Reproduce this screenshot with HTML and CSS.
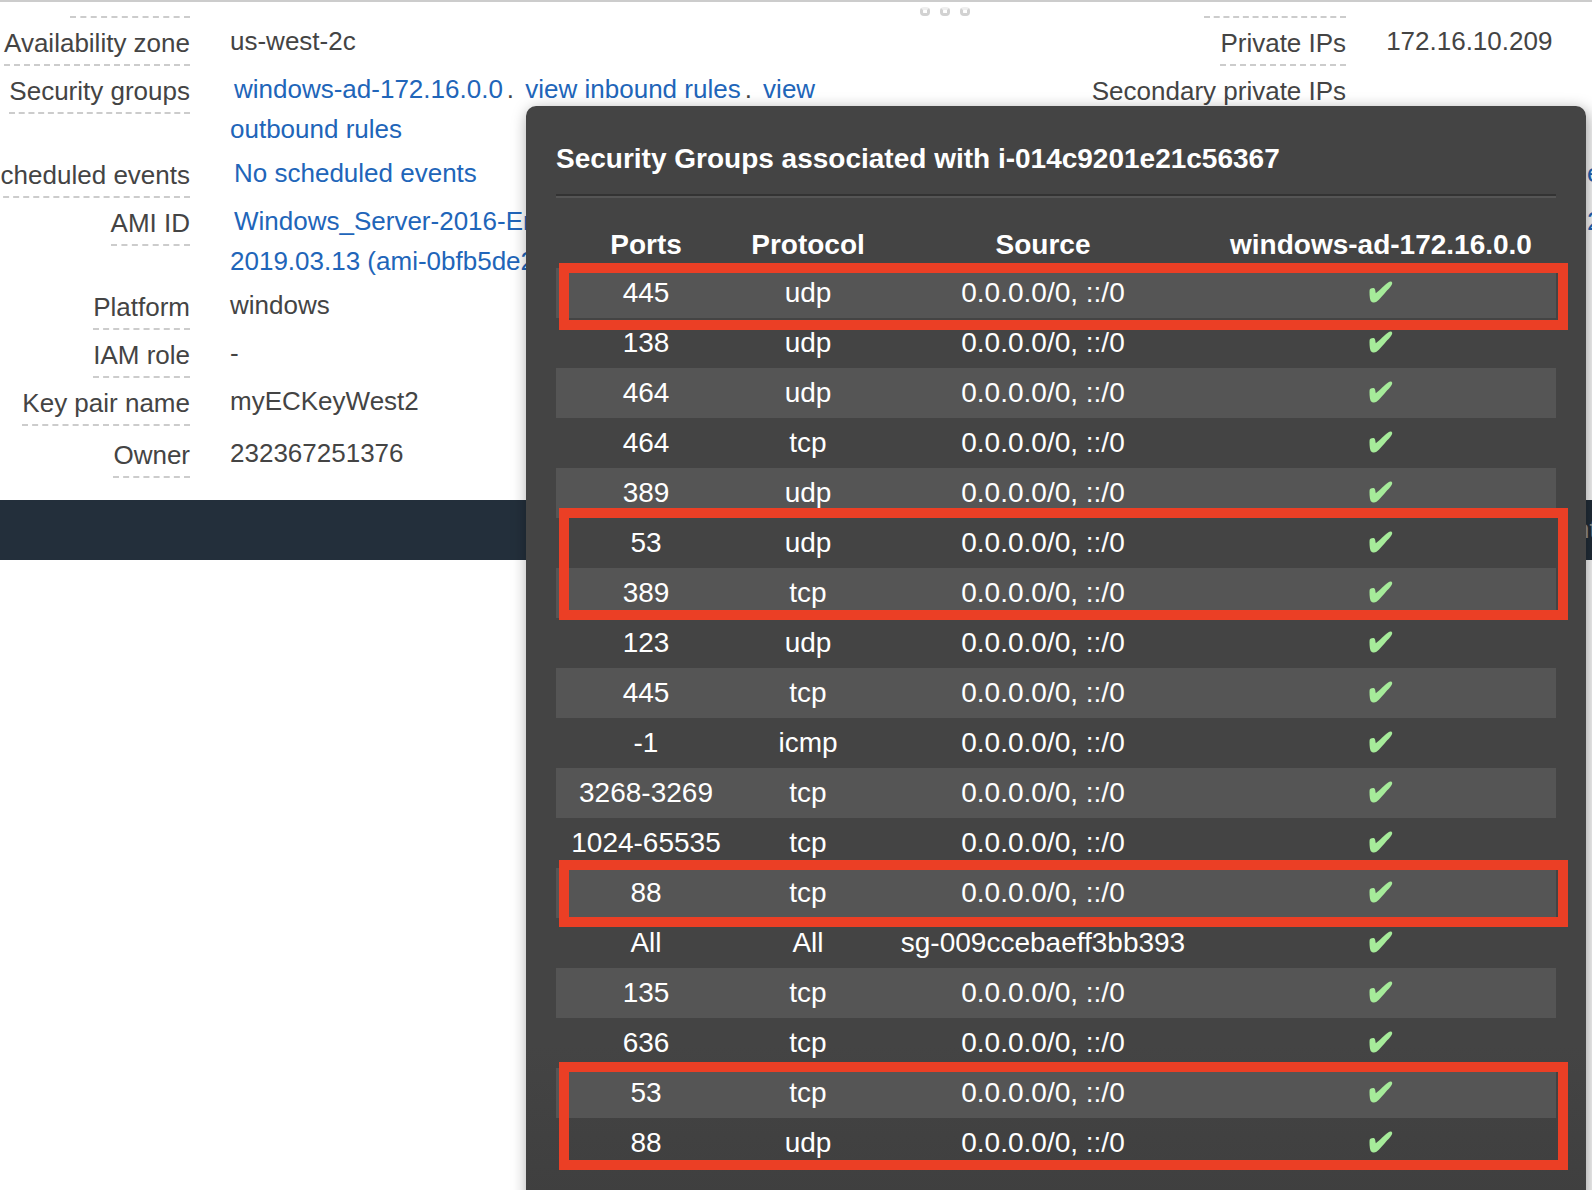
FILE: index.html
```html
<!DOCTYPE html>
<html lang="en">
<head>
<meta charset="utf-8">
<title>Instance details</title>
<link rel="stylesheet" href="styles.css">
</head>
<body>
<svg class="defs" aria-hidden="true"><symbol id="check" viewBox="0 0 24 22"><path d="M0.6 9C0.8 7.500 3.500 6.700 5.200 7.200C6.400 7.600 6.300 10.200 6.800 12.200C10.500 9.500 16 3.500 19.500 1.200C21 .2 23.400 .2 23.200 2.400C23 4.500 20.500 6.800 18 9.500C14.500 13.500 10.500 18.500 7.500 20.800C5.500 22 2.600 21.700 1.500 19.500C.6 17 .3 11.500 .6 9Z"/></symbol></svg>
<main class="page">
  <div class="grip" aria-hidden="true"><i></i><i></i><i></i></div>
  <section class="details">
    <dl class="list">
      <div class="row cut"><dt><span class="stub"></span></dt></div>
      <div class="row"><dt><span>Availability zone</span></dt><dd>us-west-2c</dd></div>
      <div class="row"><dt><span>Security groups</span></dt><dd><a href="#">windows-ad-172.16.0.0</a>. <a href="#">view inbound rules</a>. <a href="#">view<br>outbound rules</a></dd></div>
      <div class="row"><dt><span>Scheduled events</span></dt><dd><a href="#">No scheduled events</a></dd></div>
      <div class="row"><dt><span>AMI ID</span></dt><dd><a href="#">Windows_Server-2016-En<br>2019.03.13 (ami-0bfb5de2</a></dd></div>
      <div class="row"><dt><span>Platform</span></dt><dd>windows</dd></div>
      <div class="row"><dt><span>IAM role</span></dt><dd>-</dd></div>
      <div class="row"><dt><span>Key pair name</span></dt><dd>myECKeyWest2</dd></div>
      <div class="row spaced"><dt><span>Owner</span></dt><dd>232367251376</dd></div>
    </dl>
    <dl class="list side">
      <div class="row cut"><dt><span class="stub wide"></span></dt></div>
      <div class="row"><dt><span>Private IPs</span></dt><dd>172.16.10.209</dd></div>
      <div class="row tall"><dt><span>Secondary private IPs</span></dt><dd></dd></div>
      <div class="row"><dt></dt><dd class="edge"><a href="#">e</a></dd></div>
      <div class="row"><dt></dt><dd class="edge"><a href="#">2</a></dd></div>
    </dl>
  </section>
  <footer class="footer"><span>nt</span></footer>

  <section class="popover">
    <h2>Security Groups associated with i-014c9201e21c56367</h2>
    <div class="rules">
      <table>
        <thead><tr><th class="c-ports">Ports</th><th class="c-protocol">Protocol</th><th class="c-source">Source</th><th class="c-group">windows-ad-172.16.0.0</th></tr></thead>
        <tbody>
          <tr><td>445</td><td>udp</td><td>0.0.0.0/0, ::/0</td><td><svg class="check" role="img" aria-label="Yes"><use href="#check"/></svg></td></tr>
          <tr><td>138</td><td>udp</td><td>0.0.0.0/0, ::/0</td><td><svg class="check" role="img" aria-label="Yes"><use href="#check"/></svg></td></tr>
          <tr><td>464</td><td>udp</td><td>0.0.0.0/0, ::/0</td><td><svg class="check" role="img" aria-label="Yes"><use href="#check"/></svg></td></tr>
          <tr><td>464</td><td>tcp</td><td>0.0.0.0/0, ::/0</td><td><svg class="check" role="img" aria-label="Yes"><use href="#check"/></svg></td></tr>
          <tr><td>389</td><td>udp</td><td>0.0.0.0/0, ::/0</td><td><svg class="check" role="img" aria-label="Yes"><use href="#check"/></svg></td></tr>
          <tr><td>53</td><td>udp</td><td>0.0.0.0/0, ::/0</td><td><svg class="check" role="img" aria-label="Yes"><use href="#check"/></svg></td></tr>
          <tr><td>389</td><td>tcp</td><td>0.0.0.0/0, ::/0</td><td><svg class="check" role="img" aria-label="Yes"><use href="#check"/></svg></td></tr>
          <tr><td>123</td><td>udp</td><td>0.0.0.0/0, ::/0</td><td><svg class="check" role="img" aria-label="Yes"><use href="#check"/></svg></td></tr>
          <tr><td>445</td><td>tcp</td><td>0.0.0.0/0, ::/0</td><td><svg class="check" role="img" aria-label="Yes"><use href="#check"/></svg></td></tr>
          <tr><td>-1</td><td>icmp</td><td>0.0.0.0/0, ::/0</td><td><svg class="check" role="img" aria-label="Yes"><use href="#check"/></svg></td></tr>
          <tr><td>3268-3269</td><td>tcp</td><td>0.0.0.0/0, ::/0</td><td><svg class="check" role="img" aria-label="Yes"><use href="#check"/></svg></td></tr>
          <tr><td>1024-65535</td><td>tcp</td><td>0.0.0.0/0, ::/0</td><td><svg class="check" role="img" aria-label="Yes"><use href="#check"/></svg></td></tr>
          <tr><td>88</td><td>tcp</td><td>0.0.0.0/0, ::/0</td><td><svg class="check" role="img" aria-label="Yes"><use href="#check"/></svg></td></tr>
          <tr><td>All</td><td>All</td><td>sg-009ccebaeff3bb393</td><td><svg class="check" role="img" aria-label="Yes"><use href="#check"/></svg></td></tr>
          <tr><td>135</td><td>tcp</td><td>0.0.0.0/0, ::/0</td><td><svg class="check" role="img" aria-label="Yes"><use href="#check"/></svg></td></tr>
          <tr><td>636</td><td>tcp</td><td>0.0.0.0/0, ::/0</td><td><svg class="check" role="img" aria-label="Yes"><use href="#check"/></svg></td></tr>
          <tr><td>53</td><td>tcp</td><td>0.0.0.0/0, ::/0</td><td><svg class="check" role="img" aria-label="Yes"><use href="#check"/></svg></td></tr>
          <tr><td>88</td><td>udp</td><td>0.0.0.0/0, ::/0</td><td><svg class="check" role="img" aria-label="Yes"><use href="#check"/></svg></td></tr>
        </tbody>
      </table>
      <div class="mark mark-1"></div>
      <div class="mark mark-2"></div>
      <div class="mark mark-3"></div>
      <div class="mark mark-4"></div>
    </div>
  </section>
</main>
</body>
</html>
```
FILE: styles.css
```css
* { box-sizing: border-box; }
body {
  margin: 0;
  background: #fff;
  color: #444;
  font: 26px/40px "Liberation Sans", Arial, sans-serif;
}
.defs { position: absolute; width: 0; height: 0; }
.page {
  position: relative;
  height: 100vh;
  overflow: hidden;
  border-top: 2px solid #ccc;
}

/* pane resize grip */
.grip {
  position: absolute;
  top: 5px;
  left: 0;
  right: 0;
  display: flex;
  justify-content: center;
  gap: 10px;
  padding-left: 298px;
}
.grip i {
  width: 10px;
  height: 9px;
  border: 3px solid #d2d2d2;
  border-top-color: #eee;
  border-radius: 4px;
  background: #fff;
}

/* instance details */
.details { display: flex; height: 498px; }
.list { margin: 0; flex: 1; }
.row { display: grid; grid-template-columns: 190px 1fr; column-gap: 40px; align-items: start; }
.side .row { grid-template-columns: 531px 1fr; }
.cut { height: 16px; align-items: end; }
.tall { min-height: 84px; }
.spaced { margin-top: 4px; }
dt { display: flex; justify-content: flex-end; white-space: nowrap; }
dt span { padding: 5px 0 1px; border-bottom: 2px dashed #ccc; }
dt .stub { width: 120px; padding: 0; }
dt .stub.wide { width: 142px; }
dd { margin: 0; padding: 3px 0 1px; white-space: nowrap; min-height: 48px; }
.row:has(br) dd { height: 84px; }
a { color: #2165b9; text-decoration: none; }
dd a { padding: 0 4px; }
.edge { display: flex; justify-content: flex-end; overflow: hidden; }
.edge a { width: 5px; padding: 0; }

.footer {
  display: flex;
  justify-content: flex-end;
  height: 60px;
  padding: 9px 0;
  background: #232f3b;
  color: #999;
  overflow: hidden;
}
.footer span { width: 17px; }

/* security group popover */
.popover {
  position: absolute;
  top: 104px;
  left: 526px;
  right: 6px;
  min-height: 1100px;
  padding: 30px;
  border-radius: 10px;
  background: linear-gradient(#444 0, #444 940px, #3f3f3f 1090px);
  color: #fff;
  font-size: 28px;
  box-shadow: 2px 4px 16px rgba(0, 0, 0, .4);
}
h2 {
  margin: 0;
  height: 62px;
  font-size: 28px;
  line-height: 46px;
  border-bottom: 2px solid #555;
  box-shadow: inset 0 -2px #333;
  white-space: nowrap;
}
.rules { position: relative; padding-top: 20px; }
table { width: 100%; table-layout: fixed; border-collapse: collapse; text-align: center; }
th, td { height: 50px; padding: 0; line-height: 50px; vertical-align: top; white-space: nowrap; }
th { padding-top: 4px; line-height: 46px; }
.c-ports { width: 180px; }
.c-protocol { width: 144px; }
.c-group { width: 350px; }
tbody tr:nth-child(odd) { background: #555; }
.check { display: block; width: 24px; height: 22px; margin: 13px auto 0; fill: #a6eb9a; }

.mark { position: absolute; left: 3px; right: -12px; border: 10px solid #eb3f25; }
.mark-1 { top: 65px; height: 67px; }
.mark-2 { top: 310px; height: 112px; }
.mark-3 { top: 662px; height: 67px; }
.mark-4 { top: 864px; height: 108px; }
```
